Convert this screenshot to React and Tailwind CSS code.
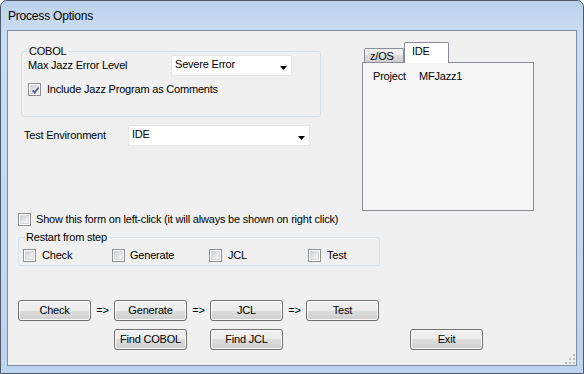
import React from "react";

function CheckBox({ checked }) {
  return (
    <div className="w-[13px] h-[13px] shrink-0 border border-[#8e8f8f] bg-white p-[1px]">
      <div className="relative w-full h-full border border-[#d8d9db] bg-[linear-gradient(135deg,#c9ccd1_0%,#e4e6e8_50%,#f7f7f7_100%)]">
        {checked && (
          <svg width="9" height="9" viewBox="0 0 9 9" className="absolute left-[0px] top-[0px]">
            <path d="M1.5 4.2 L3.6 6.6 L7.6 1.4" stroke="#4a5d86" strokeWidth="1.7" fill="none" />
          </svg>
        )}
      </div>
    </div>
  );
}

function Combo({ value, width }) {
  return (
    <div className={`${width} h-[21px] shrink-0 flex items-start justify-between bg-white border border-[#e6e6e6] pl-[3px] pr-[4px] pt-[2px]`}>
      <span>{value}</span>
      <svg width="7" height="4" viewBox="0 0 7 4" className="mt-[8px]">
        <path d="M0 0 H7 L3.5 4 Z" fill="#000" />
      </svg>
    </div>
  );
}

function Btn({ children, className = "" }) {
  return (
    <div
      className={`w-[73px] h-[21px] shrink-0 flex items-center justify-center rounded-[3px] border border-[#707070] bg-[linear-gradient(#f2f2f2_0%,#ebebeb_50%,#dddddd_50%,#cfcfcf_100%)] shadow-[inset_0_0_0_1px_#fbfbfb] ${className}`}
    >
      {children}
    </div>
  );
}

function Arrow() {
  return <span className="w-[23px] shrink-0 text-center">=&gt;</span>;
}

export default function App() {
  return (
    <div className="w-[584px] h-[374px] flex flex-col rounded-t-[7px] border border-[#4b5a6d] bg-[linear-gradient(180deg,#bcd2ec_0%,#cadcf1_8%,#c3d8ef_60%,#bdd4ec_100%)] font-['Liberation_Sans',Arial,sans-serif] text-[11px] leading-[13px] tracking-[-0.2px] text-black overflow-hidden">
      <div className="h-[29px] shrink-0 flex items-center pl-[7px] pt-[1px] text-[12px] tracking-[-0.2px] leading-[14px]">
        Process Options
      </div>
      <div className="relative flex-1 mx-[6px] mb-[7px] border border-[#7c8ea5] bg-[#f0f0f0] flex flex-col">
        {/* top section */}
        <div className="flex">
          <div className="ml-[13px] w-[341px] shrink-0 flex flex-col">
            <div className="mt-[20px] w-[300px] h-[66px] rounded-[3px] border border-[#d5dfe5] flex flex-col">
              <span className="-mt-[7px] ml-[6px] px-[1px] w-fit bg-[#f0f0f0]">COBOL</span>
              <div className="-mt-[3px] flex items-center">
                <span className="ml-[6px] w-[143px] shrink-0">Max Jazz Error Level</span>
                <Combo value="Severe Error" width="w-[121px]" />
              </div>
              <div className="mt-[7px] ml-[6px] flex items-center gap-[6px]">
                <CheckBox checked />
                <span>Include Jazz Program as Comments</span>
              </div>
            </div>
            <div className="mt-[8px] ml-[3px] flex items-center">
              <span className="w-[104px] shrink-0">Test Environment</span>
              <Combo value="IDE" width="w-[182px]" />
            </div>
          </div>
          <div className="mt-[11px] w-[172px] shrink-0 flex flex-col">
            <div className="flex items-end pl-[2px]">
              <div className="w-[40px] h-[14px] border border-b-0 border-[#898c95] rounded-t-[2px] bg-[linear-gradient(#f2f2f2_0%,#ebebeb_50%,#dddddd_50%,#cfcfcf_100%)] flex items-start pl-[5px] pt-[1px]">
                z/OS
              </div>
              <div className="relative z-10 -mb-[1px] w-[45px] h-[21px] border border-b-0 border-[#898c95] rounded-t-[2px] bg-white pl-[7px] pt-[2px]">
                IDE
              </div>
            </div>
            <div className="h-[149px] border border-[#898c95] bg-[#f6f6f6] pt-[7px] pl-[10px] flex">
              <span className="w-[46px] shrink-0">Project</span>
              <span>MFJazz1</span>
            </div>
          </div>
        </div>

        <div className="mt-[2px] ml-[10px] flex items-center gap-[5px]">
          <CheckBox />
          <span>Show this form on left-click (it will always be shown on right click)</span>
        </div>

        <div className="mt-[11px] ml-[10px] w-[362px] h-[29px] rounded-[3px] border border-[#d5dfe5] flex flex-col">
          <span className="-mt-[7px] ml-[6px] px-[1px] w-fit bg-[#f0f0f0]">Restart from step</span>
          <div className="mt-[5px] ml-[4px] flex">
            <div className="w-[89px] flex items-center gap-[6px]">
              <CheckBox />
              <span>Check</span>
            </div>
            <div className="w-[97px] flex items-center gap-[5px]">
              <CheckBox />
              <span>Generate</span>
            </div>
            <div className="w-[99px] flex items-center gap-[6px]">
              <CheckBox />
              <span>JCL</span>
            </div>
            <div className="flex items-center gap-[6px]">
              <CheckBox />
              <span>Test</span>
            </div>
          </div>
        </div>

        <div className="mt-[34px] ml-[10px] flex items-center">
          <Btn>Check</Btn>
          <Arrow />
          <Btn>Generate</Btn>
          <Arrow />
          <Btn>JCL</Btn>
          <Arrow />
          <Btn>Test</Btn>
        </div>
        <div className="mt-[8px] ml-[106px] flex items-center">
          <Btn>Find COBOL</Btn>
          <div className="w-[23px] shrink-0" />
          <Btn>Find JCL</Btn>
          <div className="w-[127px] shrink-0" />
          <Btn>Exit</Btn>
        </div>

        <svg width="10" height="10" viewBox="0 0 10 10" className="absolute right-[1px] bottom-[1px]">
          <g fill="#b8bcc2">
            <rect x="8" y="0" width="2" height="2" />
            <rect x="8" y="4" width="2" height="2" />
            <rect x="8" y="8" width="2" height="2" />
            <rect x="4" y="4" width="2" height="2" />
            <rect x="4" y="8" width="2" height="2" />
            <rect x="0" y="8" width="2" height="2" />
          </g>
        </svg>
      </div>
    </div>
  );
}
